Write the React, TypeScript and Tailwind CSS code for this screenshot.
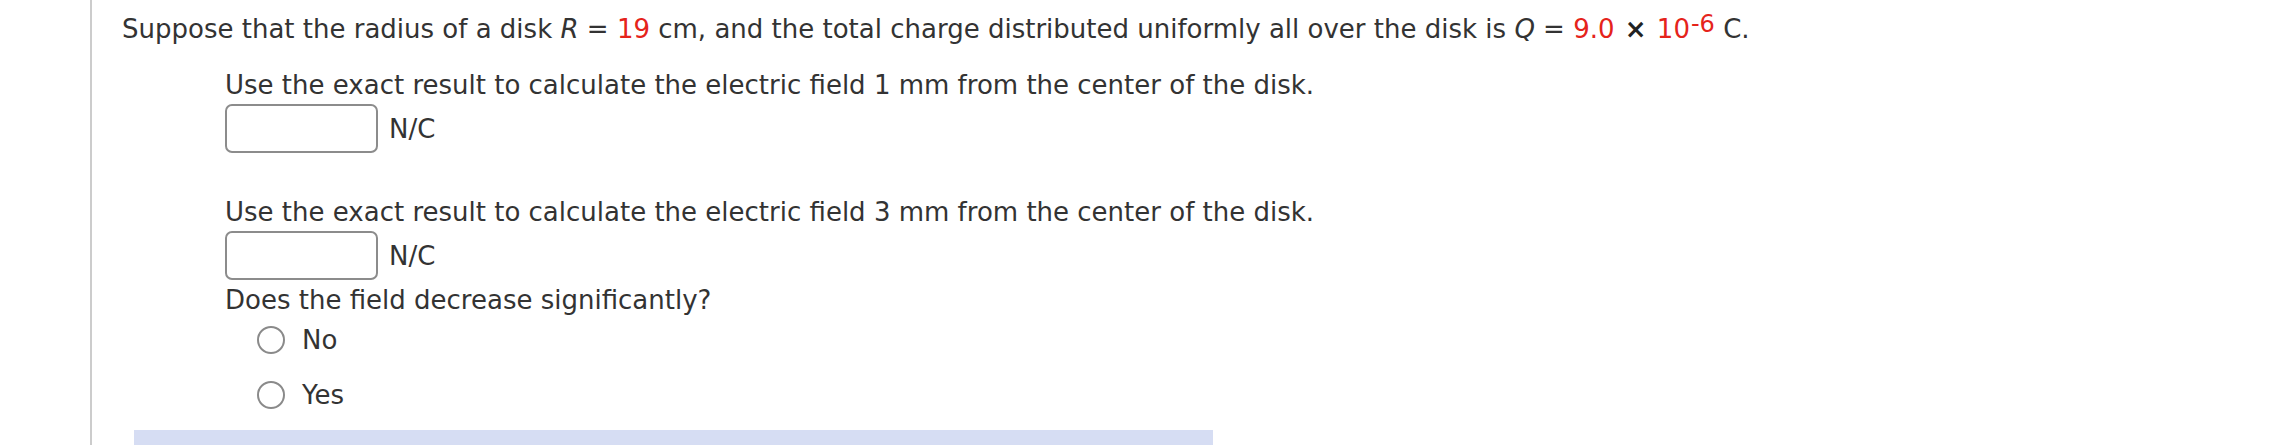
import React from "react";

const font = { fontFamily: '"DejaVu Sans", Verdana, sans-serif' };

function AnswerBox() {
  return (
    <div className="flex items-center mt-[2px]">
      <div className="w-[153px] h-[49px] border-2 border-[#8c8c8c] rounded-[7px] bg-white" />
      <span className="ml-[11px]">N/C</span>
    </div>
  );
}

function Radio({ label, className }: { label: string; className: string }) {
  return (
    <div className={`flex items-center ml-[32px] ${className}`}>
      <span className="w-[28px] h-[28px] rounded-full border-2 border-[#8a8a8a] bg-white" />
      <span className="ml-[17px]">{label}</span>
    </div>
  );
}

export default function App() {
  return (
    <div className="flex w-[2292px] h-[445px] bg-white overflow-hidden" style={font}>
      <div className="w-[90px] shrink-0" />
      <div className="w-[2px] shrink-0 bg-[#cccccc]" />
      <div className="flex flex-col text-[26px] leading-[34px] text-[#333333] pl-[30px] pt-[12px]">
        <p className="whitespace-nowrap">
          Suppose that the radius of a disk <i>R</i> = <span className="text-[#e5231b]">19</span> cm, and the total
          charge distributed uniformly all over the disk is <i>Q</i> ={" "}
          <span className="text-[#e5231b]">9.0</span> <b className="text-[#222] mx-[2px]">×</b>{" "}
          <span className="text-[#e5231b]">
            10<sup className="text-[24px] relative -top-[6px] ml-[1px]">-6</sup>
          </span>{" "}
          C.
        </p>

        <div className="flex flex-col pl-[103px] mt-[22px]">
          <p className="whitespace-nowrap">
            Use the exact result to calculate the electric field 1 mm from the center of the disk.
          </p>
          <AnswerBox />

          <p className="whitespace-nowrap mt-[42px]">
            Use the exact result to calculate the electric field 3 mm from the center of the disk.
          </p>
          <AnswerBox />

          <p className="whitespace-nowrap mt-[3px]">Does the field decrease significantly?</p>
          <Radio label="No" className="mt-[9px] h-[28px]" />
          <Radio label="Yes" className="mt-[27px] h-[28px]" />
        </div>

        <div className="mt-[21px] ml-[12px] w-[1079px] h-[20px] bg-[#d6ddf3]" />
      </div>
    </div>
  );
}
